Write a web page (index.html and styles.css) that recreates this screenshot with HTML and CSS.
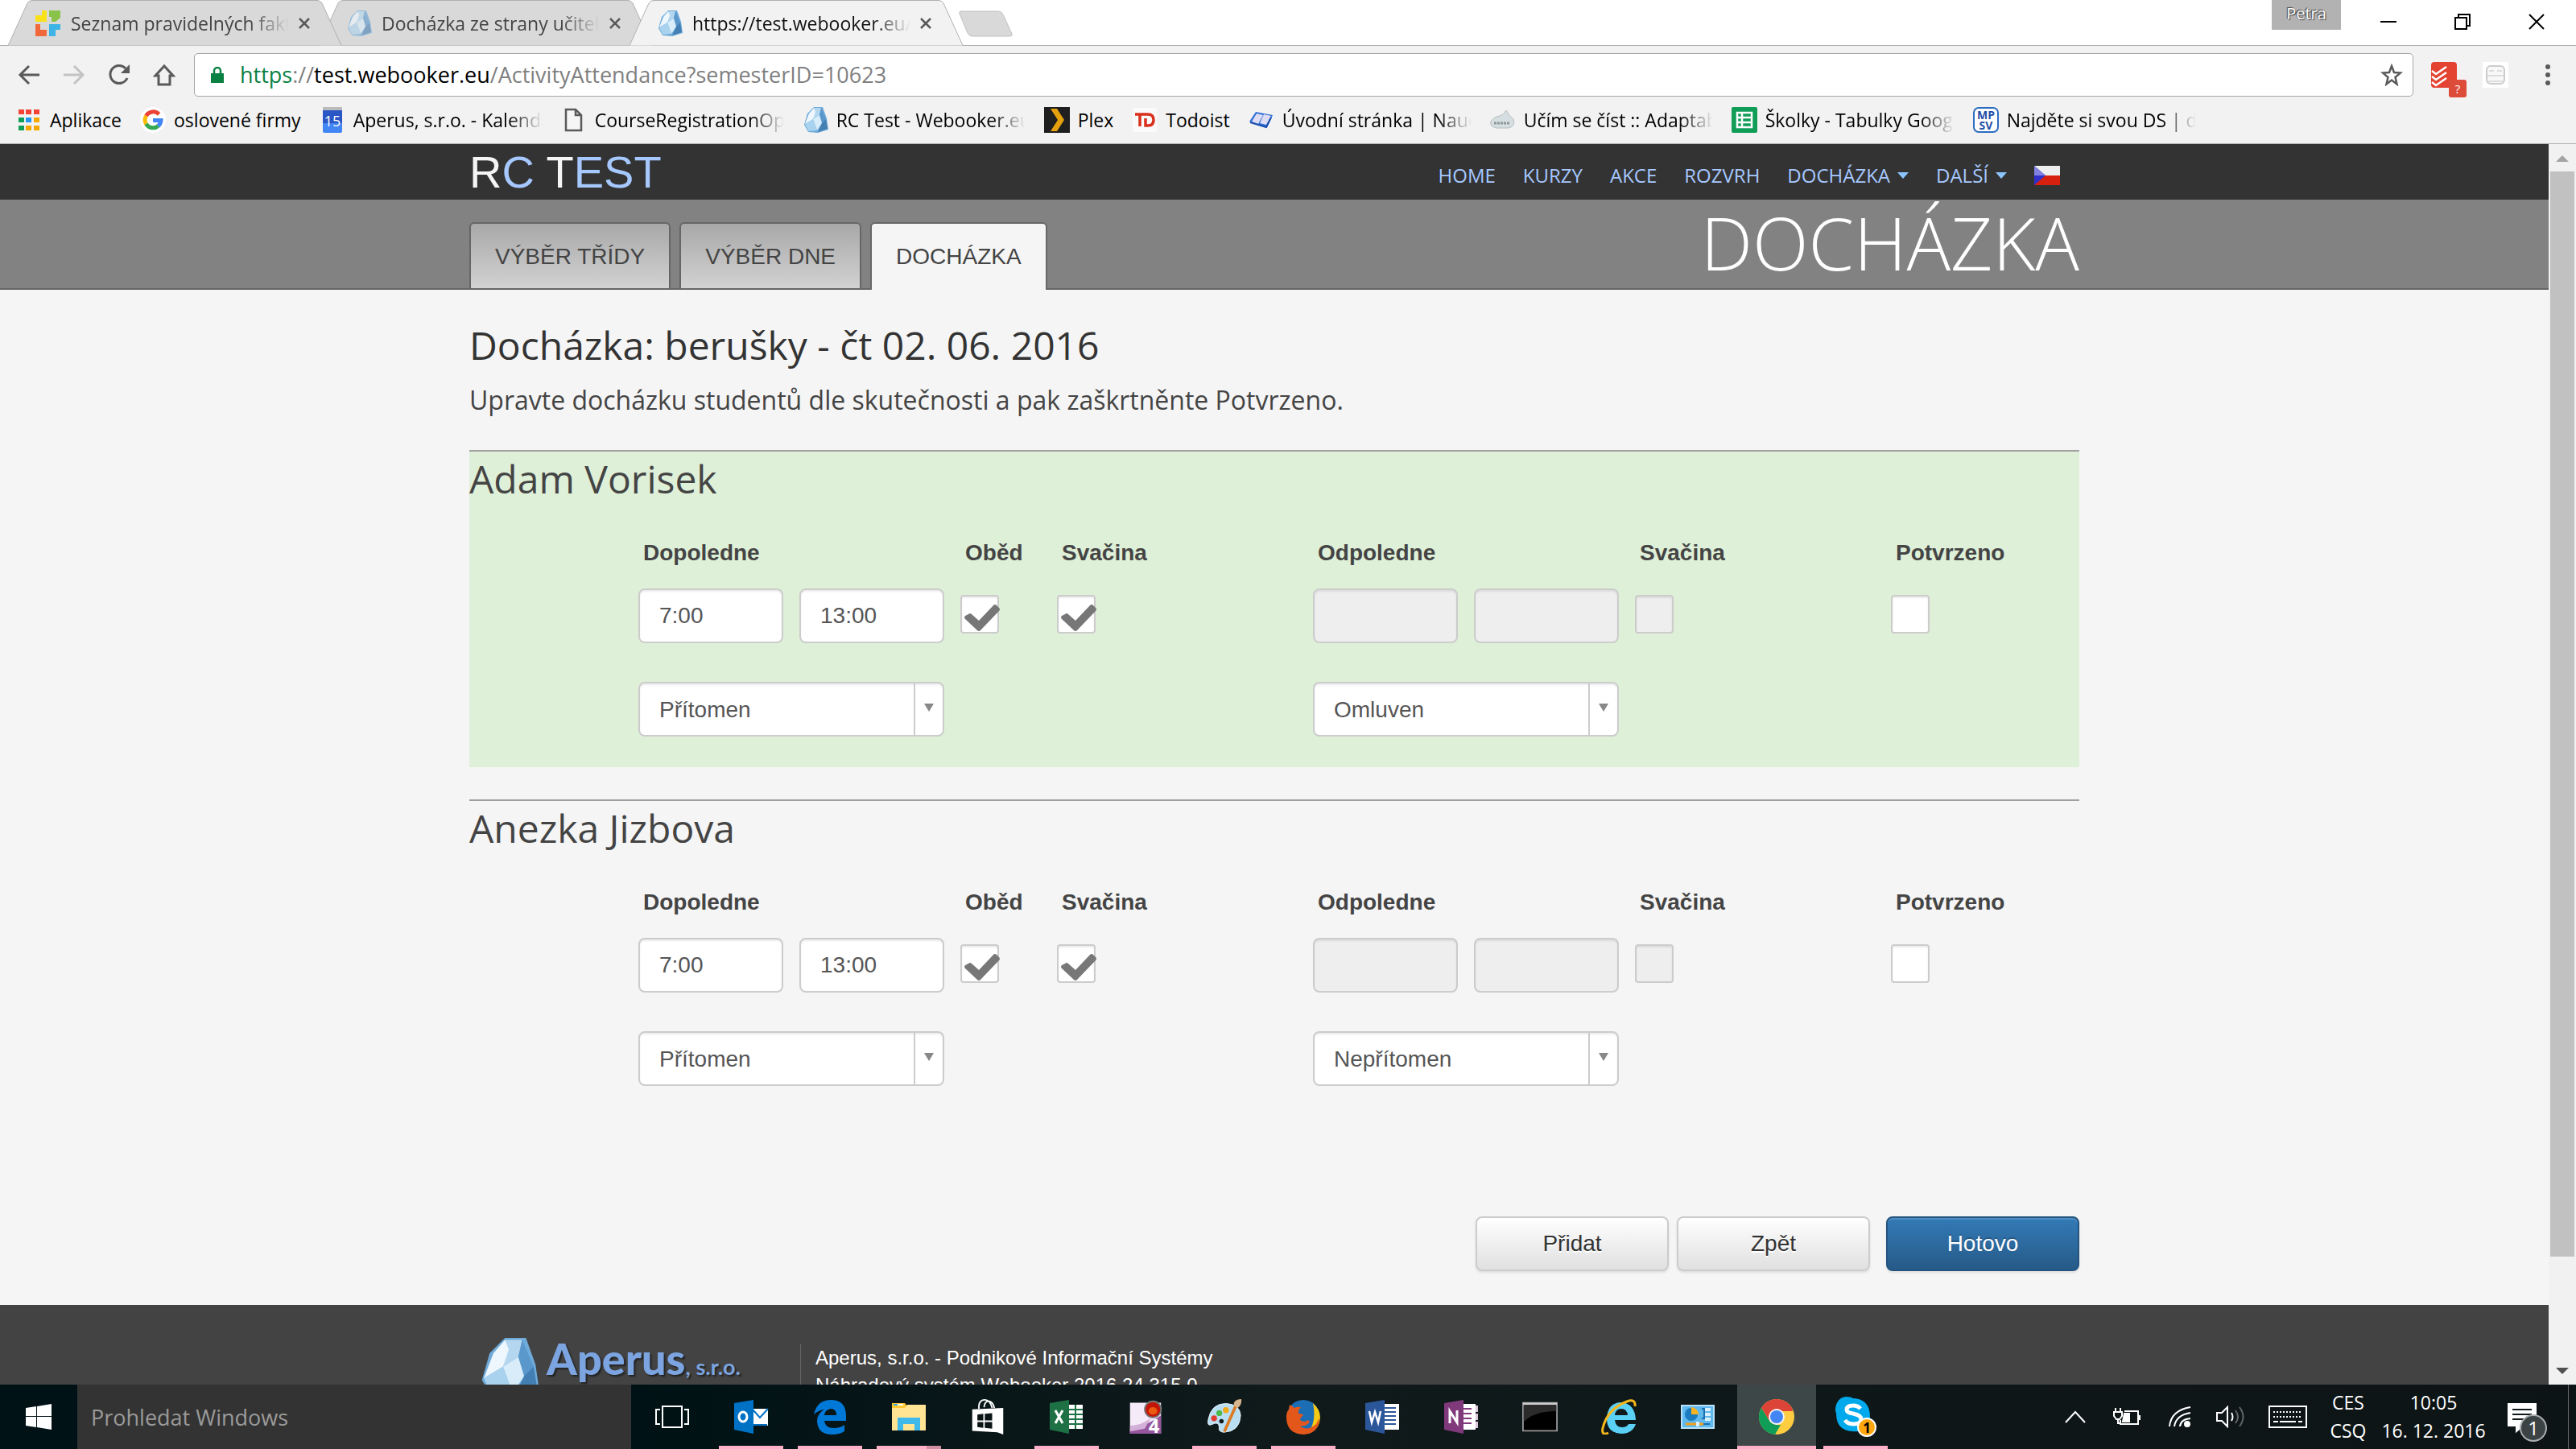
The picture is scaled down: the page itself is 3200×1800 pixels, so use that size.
FILE: index.html
```html
<!DOCTYPE html>
<html lang="cs">
<head>
    <meta charset="UTF-8">
    <meta name="viewport" content="width=device-width, initial-scale=1.0">
    <title>Docházka</title>
    <link rel="stylesheet" href="styles.css">
</head>
<body>
    <!-- Shared shapes -->
    <svg class="defs" aria-hidden="true">
        <defs>
            <symbol id="gem" viewBox="0 0 32 32">
                <path fill="#6fabda" d="M14 0h11l5 14 2 14-13 4-12-1-5-9 4-14z"/>
                <path fill="#eef7fd" d="M14 1l-6 7-5 13 10-6 4-9z"/>
                <path fill="#b4d7ef" d="M14 1h9l-2 9-8 5 3-9z"/>
                <path fill="#5a97cb" d="M23 1l6 14-5 5-3-10z"/>
                <path fill="#d8ecf9" d="M13 15l8-5 3 10-6 9z"/>
                <path fill="#a9d2ee" d="M3 21l10-6 5 14-11 1z"/>
                <path fill="#447fb3" d="M24 20l5-5 2 12-12 4z"/>
            </symbol>
            <symbol id="x" viewBox="0 0 14 14"><path d="M1 1l12 12M13 1L1 13" fill="none" stroke="#5a5a5a" stroke-width="2.5"/></symbol>
            <symbol id="tick" viewBox="0 0 44 34"><path fill="#777" d="M5 13q2-2 4 0l9 8L36 2q2-2 4 0l3 3q2 2 0 4L20 33q-2 2-4 0L1 19q-2-2 0-4z"/></symbol>
            <symbol id="tabshape" viewBox="0 0 414 57" preserveAspectRatio="none">
                <path d="M0 56.500L24 4q2-3.500 6-3.500h354q4 0 6 3.500l24 52.500" stroke="#b0b0b0"/>
            </symbol>
        </defs>
    </svg>

    <header class="browser">
        <div class="tabstrip">
            <div class="tab tab-first">
                <svg class="tab-shape"><use href="#tabshape"/></svg>
                <svg class="ico" viewBox="0 0 32 32">
                    <path fill="#f9e219" d="M8 0h6v14H0V6h8z"/><path fill="#8bc34a" d="M17 0h14v9l-6 5h-5V8h-3z"/>
                    <path fill="#f1693a" d="M0 17h6v7h8v8H0z"/><path fill="#3cb4e5" d="M17 17h14v7h-6v8h-8z"/>
                </svg>
                <span class="tab-title">Seznam pravidelných fakt</span>
                <button class="tab-close" aria-label="Zavřít"><svg><use href="#x"/></svg></button>
            </div>
            <div class="tab tab-second">
                <svg class="tab-shape"><use href="#tabshape"/></svg>
                <svg class="ico faded"><use href="#gem"/></svg>
                <span class="tab-title">Docházka ze strany učitele</span>
                <button class="tab-close" aria-label="Zavřít"><svg><use href="#x"/></svg></button>
            </div>
            <div class="tab tab-active">
                <svg class="tab-shape"><use href="#tabshape"/></svg>
                <svg class="ico"><use href="#gem"/></svg>
                <span class="tab-title">https://test.webooker.eu/</span>
                <button class="tab-close" aria-label="Zavřít"><svg><use href="#x"/></svg></button>
            </div>
            <button class="newtab" aria-label="Nová karta">
                <svg viewBox="0 0 68 34"><path d="M4 1h46q4 0 6 4l11 24q1 3-3 3H18q-4 0-6-4L2 4q-1-3 2-3z" fill="#d9d9d9" stroke="#c0c0c0"/></svg>
            </button>
            <div class="window-controls">
                <span class="profile">Petra</span>
                <button aria-label="Minimalizovat"><svg viewBox="0 0 20 20"><path d="M0 10h20"/></svg></button>
                <button aria-label="Obnovit"><svg viewBox="0 0 20 20"><path d="M5 4V1h14v14h-3M1 5h14v14H1z"/></svg></button>
                <button aria-label="Zavřít okno"><svg viewBox="0 0 20 20"><path d="M1 1l18 18M19 1L1 19"/></svg></button>
            </div>
        </div>

        <div class="toolbar">
            <button class="tool" aria-label="Zpět"><svg viewBox="0 0 28 28"><path d="M27 14H3M14 3L3 14l11 11"/></svg></button>
            <button class="tool off" aria-label="Vpřed"><svg viewBox="0 0 28 28"><path d="M1 14h24M14 3l11 11-11 11"/></svg></button>
            <button class="tool" aria-label="Načíst"><svg viewBox="0 0 28 28"><path d="M24 18a11 11 0 1 1-2-12"/><path d="M27 1v11H16z" fill="#5a5a5a" stroke="none"/></svg></button>
            <button class="tool" aria-label="Domů"><svg viewBox="0 0 28 28"><path d="M14 3L3 15h4v11h14V15h4z"/></svg></button>
            <div class="omnibox">
                <svg class="lock" viewBox="0 0 18 22"><path d="M1 9h16v12H1z" fill="#0b8043"/><path d="M5 10V6a4 4 0 0 1 8 0v4" fill="none" stroke="#0b8043" stroke-width="2.500"/></svg>
                <span class="url"><span class="secure">https</span>://<span class="host">test.webooker.eu</span>/ActivityAttendance?semesterID=10623</span>
                <svg class="star" viewBox="0 0 28 28"><path d="M14 3l3 8 8 .5-6.500 5.500 2 8.500-6.500-5-6.500 5 2-8.500L3 11.500l8-.5z" fill="none" stroke="#5a5a5a" stroke-width="2.500"/></svg>
            </div>
            <div class="extensions">
                <div class="todoist">
                    <svg class="ico" viewBox="0 0 32 32"><rect width="32" height="32" rx="4" fill="#e44332"/><path d="M1 11l5 4L19 6M1 18l5 4 13-9M1 25l5 4 13-9" fill="none" stroke="#fff" stroke-width="2.500"/></svg>
                    <span class="ext-badge">?</span>
                </div>
                <svg class="ico" viewBox="0 0 32 32"><path fill="#fff" d="M0 0h32v32H0z"/><rect x="5" y="5" width="22" height="22" rx="5" fill="#f8f8f8" stroke="#ccc" stroke-width="2"/><path d="M8 11h6M18 11h6M6 17h20M7 24h18" stroke="#ddd" stroke-width="2"/></svg>
                <svg class="dots" viewBox="0 0 8 28"><circle cx="4" cy="4" r="3"/><circle cx="4" cy="14" r="3"/><circle cx="4" cy="24" r="3"/></svg>
            </div>
        </div>

        <nav class="bookmarks">
            <a href="#"><svg class="ico" viewBox="0 0 32 32"><path fill="#f44336" d="M3 3h7v6H3zM12 3h7v6h-7zM22 3h7v6h-7z"/><path fill="#0f9d58" d="M3 13h7v6H3zM3 23h7v6H3z"/><path fill="#2196f3" d="M12 13h7v6h-7z"/><path fill="#f4a800" d="M22 13h7v6h-7zM12 23h7v6h-7zM22 23h7v6h-7z"/></svg><span>Aplikace</span></a>
            <a href="#"><svg class="ico" viewBox="0 0 32 32"><circle cx="16" cy="16" r="16" fill="#fff"/><g fill="none" stroke-width="5"><path d="M7.500 11a10 10 0 0 1 16-2" stroke="#ea4335"/><path d="M7.500 11a10 10 0 0 0 0 10" stroke="#fbbc05"/><path d="M7.500 21a10 10 0 0 0 15 2.500" stroke="#34a853"/><path d="M16 16.500h10a10 10 0 0 1-3.500 7" stroke="#4285f4"/></g></svg><span>oslovené firmy</span></a>
            <a href="#" class="long"><svg class="ico" viewBox="0 0 32 32"><path fill="#bbb" d="M4 0h24v6H4z"/><path fill="#2a56c6" d="M4 4h24v18H4z"/><path fill="#4285f4" d="M4 20h24v10q0 2-2 2H6q-2 0-2-2z"/><text x="16" y="24" text-anchor="middle" class="cal">15</text></svg><span>Aperus, s.r.o. - Kalendá</span></a>
            <a href="#" class="long"><svg class="ico" viewBox="0 0 32 32"><path d="M6 3h12l7 7v19H6zM18 3v7h7" fill="#f5f5f5" stroke="#5a5a5a" stroke-width="2.500"/></svg><span>CourseRegistrationOpt</span></a>
            <a href="#" class="long"><svg class="ico"><use href="#gem"/></svg><span>RC Test - Webooker.eu</span></a>
            <a href="#"><svg class="ico" viewBox="0 0 32 32"><path fill="#1f1f1f" d="M0 0h32v32H0z"/><path fill="#e5a00d" d="M8 2h8l9 14-9 14H8l9-14z"/></svg><span>Plex</span></a>
            <a href="#"><svg class="ico" viewBox="0 0 32 32"><rect x="1" y="1" width="30" height="30" rx="3" fill="#fafafa"/><path d="M4 9h13M10 9v15M17 9h3q7 0 7 7t-7 7h-3v-9" fill="none" stroke="#d9301c" stroke-width="3.500"/></svg><span>Todoist</span></a>
            <a href="#" class="long"><svg class="ico" viewBox="0 0 32 32"><path fill="#2f6fd6" d="M9 6l21 4-7 15-22-7z"/><path fill="#dedcf2" d="M10 8l8 2-6 11-8-3zM19 9l9 2-6 11-8-2z"/><path d="M2 19l20 6 6-12" fill="none" stroke="#1a4fae" stroke-width="2"/></svg><span>Úvodní stránka | Nauč</span></a>
            <a href="#" class="long"><svg class="ico" viewBox="0 0 32 32"><path fill="#d5dee0" stroke="#b5bdc0" d="M20 4q4 7 9 11 3 9-6 11H8q-9-2-7-8 4-6 11-7 5-1 8-7z"/><path d="M5 20h20" stroke="#8d9699" stroke-width="3" stroke-dasharray="3 1"/></svg><span>Učím se číst :: Adaptab</span></a>
            <a href="#" class="long"><svg class="ico" viewBox="0 0 32 32"><rect width="32" height="32" rx="2" fill="#0f9d58"/><path d="M7 7h18v18H7zM7 13h18M7 19h18M13 7v18" fill="none" stroke="#fff" stroke-width="2.500"/></svg><span>Školky - Tabulky Goog</span></a>
            <a href="#" class="long"><svg class="ico" viewBox="0 0 32 32"><rect x="1" y="1" width="30" height="30" rx="6" fill="#fff" stroke="#2b6cc0" stroke-width="2"/><text x="16" y="15" text-anchor="middle" class="mpsv">MP</text><text x="16" y="28" text-anchor="middle" class="mpsv">SV</text></svg><span>Najděte si svou DS | d</span></a>
        </nav>
    </header>

    <div class="viewport">
        <div class="page">
            <div class="topbar">
                <div class="container topbar-inner">
                    <a href="#" class="brand">R<span>C</span> T<span>EST</span></a>
                    <nav class="menu">
                        <a href="#">HOME</a>
                        <a href="#">KURZY</a>
                        <a href="#">AKCE</a>
                        <a href="#">ROZVRH</a>
                        <a href="#" class="dropdown">DOCHÁZKA</a>
                        <a href="#" class="dropdown">DALŠÍ</a>
                        <a href="#" aria-label="Čeština"><svg class="flag" viewBox="0 0 32 24"><path fill="#eee" d="M0 0h32v12H0z"/><path fill="#d7210e" d="M0 12h32v12H0z"/><path fill="#3030c8" d="M0 0l14 12L0 24z"/><path fill="#8080e0" d="M0 0l14 12H0z"/></svg></a>
                    </nav>
                </div>
            </div>
            <div class="subbar">
                <div class="container subbar-inner">
                    <nav class="steps">
                        <a href="#">VÝBĚR TŘÍDY</a>
                        <a href="#">VÝBĚR DNE</a>
                        <a href="#" class="current">DOCHÁZKA</a>
                    </nav>
                    <div class="section-title">DOCHÁZKA</div>
                </div>
            </div>

            <main class="container">
                <h1>Docházka: berušky - čt 02. 06. 2016</h1>
                <p class="lead">Upravte docházku studentů dle skutečnosti a pak zaškrtněnte Potvrzeno.</p>

                <section class="student edited">
                    <h2>Adam Vorisek</h2>
                    <div class="fields">
                        <label class="c-am" for="am1">Dopoledne</label>
                        <label class="c-lunch" for="lunch1">Oběd</label>
                        <label class="c-snack" for="snack1">Svačina</label>
                        <label class="c-pm" for="pm1">Odpoledne</label>
                        <label class="c-snack2" for="psnack1">Svačina</label>
                        <label class="c-done" for="done1">Potvrzeno</label>

                        <div class="times c-am"><input type="text" id="am1" value="7:00"><input type="text" value="13:00" aria-label="Dopoledne do"></div>
                        <div class="check c-lunch"><input type="checkbox" id="lunch1" checked><svg><use href="#tick"/></svg></div>
                        <div class="check c-snack"><input type="checkbox" id="snack1" checked><svg><use href="#tick"/></svg></div>
                        <div class="times c-pm"><input type="text" id="pm1" disabled><input type="text" aria-label="Odpoledne do" disabled></div>
                        <div class="check c-snack2"><input type="checkbox" id="psnack1" disabled></div>
                        <div class="check c-done"><input type="checkbox" id="done1"></div>

                        <div class="select c-am"><select aria-label="Stav dopoledne"><option>Přítomen</option></select></div>
                        <div class="select c-pm"><select aria-label="Stav odpoledne"><option>Omluven</option></select></div>
                    </div>
                </section>

                <section class="student">
                    <h2>Anezka Jizbova</h2>
                    <div class="fields">
                        <label class="c-am" for="am2">Dopoledne</label>
                        <label class="c-lunch" for="lunch2">Oběd</label>
                        <label class="c-snack" for="snack2">Svačina</label>
                        <label class="c-pm" for="pm2">Odpoledne</label>
                        <label class="c-snack2" for="psnack2">Svačina</label>
                        <label class="c-done" for="done2">Potvrzeno</label>

                        <div class="times c-am"><input type="text" id="am2" value="7:00"><input type="text" value="13:00" aria-label="Dopoledne do"></div>
                        <div class="check c-lunch"><input type="checkbox" id="lunch2" checked><svg><use href="#tick"/></svg></div>
                        <div class="check c-snack"><input type="checkbox" id="snack2" checked><svg><use href="#tick"/></svg></div>
                        <div class="times c-pm"><input type="text" id="pm2" disabled><input type="text" aria-label="Odpoledne do" disabled></div>
                        <div class="check c-snack2"><input type="checkbox" id="psnack2" disabled></div>
                        <div class="check c-done"><input type="checkbox" id="done2"></div>

                        <div class="select c-am"><select aria-label="Stav dopoledne"><option>Přítomen</option></select></div>
                        <div class="select c-pm"><select aria-label="Stav odpoledne"><option>Nepřítomen</option></select></div>
                    </div>
                </section>

                <div class="actions">
                    <button class="btn">Přidat</button>
                    <button class="btn">Zpět</button>
                    <button class="btn btn-primary">Hotovo</button>
                </div>
            </main>

            <footer class="footer">
                <div class="container footer-inner">
                    <div class="logo">
                        <svg class="logo-gem"><use href="#gem"/></svg>
                        <div class="logo-text">Aperus<small>, s.r.o.</small></div>
                    </div>
                    <div class="about">Aperus, s.r.o. - Podnikové Informační Systémy<br>Náhradový systém Webooker 2016.24.315.0</div>
                </div>
            </footer>
        </div>
        <div class="scrollbar">
            <svg viewBox="0 0 16 8"><path fill="#a3a3a3" d="M8 0l8 8H0z"/></svg>
            <div class="thumb"></div>
            <svg viewBox="0 0 16 8"><path fill="#505050" d="M0 0h16L8 8z"/></svg>
        </div>
    </div>

    <div class="taskbar">
        <button class="start" aria-label="Start"><svg viewBox="0 0 32 32"><path fill="#fff" d="M0 5l13-2v12H0zM14 3l18-3v15H14zM0 16h13v13L0 27zM14 16h18v16l-18-3z"/></svg></button>
        <input class="search" type="text" placeholder="Prohledat Windows" aria-label="Prohledat Windows">
        <div class="apps-row">
            <button class="app" aria-label="Zobrazení úkolů"><svg viewBox="0 0 42 44"><path d="M9 9h24v26H9zM6 13H1v18h5M36 13h5v18h-5" fill="none" stroke="#fff" stroke-width="2"/></svg></button>
            <button class="app running" aria-label="Outlook"><svg viewBox="0 0 44 44"><path fill="#fff" d="M24 12h19v21H24z"/><path d="M24 13l9 10 10-11" fill="none" stroke="#0072c6" stroke-width="2"/><path d="M24 32h18" stroke="#0072c6" stroke-width="2"/><path fill="#0072c6" d="M1 5l24-4v42L1 38z"/><ellipse cx="12" cy="22" rx="5" ry="6" fill="none" stroke="#fff" stroke-width="3"/></svg></button>
            <button class="app running" aria-label="Edge"><svg viewBox="0 0 44 44"><path fill="#0078d7" d="M2 19Q6 1 23 1q19 0 19 20v6H15q1 9 12 9 8 0 13-4v8q-6 4-15 4Q7 44 6 28q0-10 9-15-8 1-13 6zm13 1h15q0-8-7-8-7 1-8 8z"/></svg></button>
            <button class="app running grouped" aria-label="Průzkumník"><svg viewBox="0 0 44 44"><path fill="#ffc833" d="M1 5h16l3 4v4H1z"/><path fill="#ffe494" d="M1 11h16l3-4h23v32H1z"/><path fill="#fff" d="M3 6h12v2H3z"/><path fill="#35a8e0" d="M3 6h5v2H3z"/><path fill="#3fb8ea" d="M8 23h28v16h-7v-8H15v8H8z"/></svg></button>
            <button class="app" aria-label="Store"><svg viewBox="0 0 44 48"><path d="M10 13V9q1-8 8-8t10 11M17 11q1-9 7-8 5 1 7 9" fill="none" stroke="#fff" stroke-width="2"/><path fill="#fff" d="M1 14l42-2v36l-8-3L1 43z"/><path fill="#0c1516" d="M8 21l8-1v9H8zM18 20l10-1v10H18zM8 31h8v8l-8-1zM18 31h10v9l-10-1z"/></svg></button>
            <button class="app running" aria-label="Excel"><svg viewBox="0 0 44 44"><path fill="#fff" d="M24 7h18v30H24z"/><path d="M24 13h18M24 19h18M24 25h18M24 31h18M33 7v30" stroke="#1e7145" stroke-width="2"/><path fill="#1e7145" d="M1 5l24-4v42L1 38z"/><path d="M8 14l9 16M17 14L8 30" stroke="#fff" stroke-width="3"/></svg></button>
            <button class="app" aria-label="Aplikace 4"><svg viewBox="0 0 44 48"><path fill="#f5eaf8" d="M1 5h42v42H1z"/><path fill="#96569e" d="M1 40q22-3 42-18v25H1z"/><path fill="#d2b0d8" d="M1 36q15 0 28-10l-8 14L1 44z"/><circle cx="32" cy="14" r="12" fill="#777"/><circle cx="32" cy="14" r="10" fill="#c41408"/><ellipse cx="32" cy="16" rx="6" ry="5" fill="#ea5a10"/><text x="26" y="46" class="four">4</text></svg></button>
            <button class="app running" aria-label="Malování"><svg viewBox="0 0 48 48"><path fill="#b9def2" stroke="#e9f6fc" d="M26 6Q6 6 2 28q-2 10 6 6t9 4q-2 6 6 7 22-1 23-23Q45 7 26 6z"/><circle cx="20" cy="30" r="3" fill="#10181a"/><circle cx="10" cy="26" r="4" fill="#e23a2c"/><circle cx="17" cy="19" r="4" fill="#4fb84a"/><circle cx="26" cy="15" r="4" fill="#f3aa18"/><path d="M40 8L24 44" stroke="#dc7b25" stroke-width="4"/><path fill="#d6b48c" d="M37 9q-2-8 10-9 1 8-5 12z"/></svg></button>
            <button class="app running" aria-label="Firefox"><svg viewBox="0 0 44 44"><circle cx="22" cy="21" r="20" fill="#1b6db4"/><path fill="#f6c915" d="M34 5q9 8 9 18-1 16-16 20 12-14 7-38z"/><path fill="#e4571b" d="M5 7q3 1 6 4 4-2 8-1-4 4-3 8 5 0 6 2-4 3-4 6 5 4 10 0l2 2q-4 7-12 5 8 8 20-2l4-8q0 20-20 21Q1 43 1 22q0-6 3-9z"/></svg></button>
            <button class="app" aria-label="Word"><svg viewBox="0 0 44 44"><path fill="#fff" d="M24 6h19v32H24z"/><path d="M24 11h15M24 16h15M24 21h15M24 26h15M24 31h15" stroke="#2b579a" stroke-width="2"/><path fill="#2b579a" d="M1 5l24-4v42L1 38z"/><path d="M6 15l3 14 4-13 4 13 3-14" fill="none" stroke="#fff" stroke-width="2.500"/></svg></button>
            <button class="app" aria-label="OneNote"><svg viewBox="0 0 44 44"><path fill="#fff" d="M24 6h16v32H24z"/><path fill="#dcc6dc" d="M40 8h3v8h-3zM40 18h3v8h-3zM40 28h3v8h-3z"/><path d="M24 12h11M24 18h11M24 24h11M24 30h11" stroke="#80397b" stroke-width="2"/><path fill="#80397b" d="M1 5l24-4v42L1 38z"/><path d="M8 30V15l9 14V14" fill="none" stroke="#fff" stroke-width="3"/></svg></button>
            <button class="app" aria-label="Příkazový řádek"><svg viewBox="0 0 48 40"><path fill="#000" stroke="#999" stroke-width="2" d="M1 1h46v38H1z"/><path fill="#ccc" d="M1 1h46v3H1z"/><path fill="#2b2b2b" d="M2 4h44v8Q14 13 2 27z"/></svg></button>
            <button class="app" aria-label="Internet Explorer"><svg viewBox="0 0 44 44"><path fill="#5bd0f5" d="M24 4q18 1 19 22H17q1 9 9 9 6 0 8-4h9q-4 12-18 12Q7 42 7 24 8 5 24 4zm-7 16h16q-1-8-8-8t-8 8z"/><path d="M9 42q-9 4-7-6Q8 12 32 3q11-4 10 6" fill="none" stroke="#f5b81c" stroke-width="3"/></svg></button>
            <button class="app" aria-label="Ovládací panely"><svg viewBox="0 0 44 44"><path fill="#5fb8ee" stroke="#b8e2fa" stroke-width="2" d="M2 8h40v28H2z"/><circle cx="14" cy="19" r="8" fill="#1b7cc0"/><path fill="#f8b31f" d="M14 19v-9a9 9 0 0 1 9 9z"/><path d="M27 12h3v12h-3M7 31h30" fill="none" stroke="#1b6fae" stroke-width="2"/><path d="M7 31h22" stroke="#f0a020" stroke-width="3"/><path fill="#d8f0fd" d="M31 11h7v4h-7zM31 17h7v4h-7zM31 23h7v4h-7zM20 28h4v6h-4z"/></svg></button>
            <button class="app running focused" aria-label="Chrome"><svg viewBox="0 0 44 44"><circle cx="22" cy="22" r="22" fill="#ffcd40"/><path fill="#db4437" d="M3 11a22 22 0 0 1 38 0l1 4H22l-9 12z"/><path fill="#0f9d58" d="M3 11l10 16q4 6 14 5l-7 12A22 22 0 0 1 3 11z"/><circle cx="22" cy="22" r="10" fill="#f5f5f5"/><circle cx="22" cy="22" r="8" fill="#4285f4"/></svg></button>
            <button class="app running" aria-label="Skype"><svg class="skype" viewBox="0 0 52 52"><path fill="#00a9ec" d="M14 1q6 0 9 2Q44 4 44 26q0 6-1 9 0 8-10 8-5 2-11 1Q2 43 2 22q-2-5 0-11 4-10 12-10z"/><path d="M32 16q-3-4-9-4-8 0-8 5 0 4 8 5 10 2 10 7 0 6-10 6-7 0-10-5" fill="none" stroke="#fff" stroke-width="5"/><circle cx="40" cy="39" r="11" fill="#ffa70f" stroke="#fff" stroke-width="2"/><text x="40" y="46" text-anchor="middle" class="one">1</text></svg></button>
        </div>
        <div class="tray">
            <svg class="t-chevron" viewBox="0 0 26 16"><path d="M1 15L13 2l12 13"/></svg>
            <svg class="t-battery" viewBox="0 0 34 26"><path d="M14 6h17v16H9v-5M33 11v6M3 2v5M9 2v5M1 7h10v5l-3 4H4l-3-4zM6 16v5h3"/><path d="M14 9h6v10h-8z" fill="#fff"/></svg>
            <svg class="t-wifi" viewBox="0 0 28 28"><path d="M1 26Q3 6 27 2M7 26Q9 12 27 9M14 26q1-9 13-10"/><circle cx="23" cy="23" r="3" fill="#fff"/></svg>
            <svg class="t-volume" viewBox="0 0 36 28"><path d="M1 9h6l7-7v24l-7-7H1zM19 9q3 5 0 10"/><path class="dim" d="M24 6q6 8 0 16M29 2q9 12 0 24"/></svg>
            <svg class="t-keyboard" viewBox="0 0 48 28"><path d="M1 1h46v26H1z"/><path d="M6 8h36M6 14h36" stroke-dasharray="2 2"/><path d="M6 20h6M14 20h20M37 20h5"/></svg>
            <div class="lang">CES<br>CSQ</div>
            <div class="clock">10:05<br>16. 12. 2016</div>
            <div class="notify">
                <svg viewBox="0 0 50 48"><path fill="#fff" d="M1 1h34v27H19l-8 7v-7H1z"/><path d="M6 8h24M6 14h24M6 20h16" stroke="#10181a" stroke-width="2"/><circle cx="32" cy="31" r="16" fill="#3c4345" stroke="#a9adae" stroke-width="2"/><text x="32" y="40" text-anchor="middle" class="count">1</text></svg>
            </div>
        </div>
    </div>
</body>
</html>
```
FILE: styles.css
```css
* {
    box-sizing: border-box;
}

body {
    margin: 0;
    height: 100vh;
    display: flex;
    flex-direction: column;
    overflow: hidden;
    font-family: "Liberation Sans", Arial, sans-serif;
    font-size: 28px;
    color: #444;
    background-color: #f5f5f5;
}

button {
    padding: 0;
    border: none;
    background: none;
    font-family: inherit;
}

a {
    color: inherit;
    text-decoration: none;
}

svg {
    display: block;
    flex: none;
}

.defs {
    position: absolute;
    width: 0;
    height: 0;
}

.ico {
    width: 32px;
    height: 32px;
}

.faded {
    opacity: 0.6;
}

/* Browser window */
.browser {
    flex: none;
    height: 179px;
    border-bottom: 1px solid #b0b0b0;
    background-color: #f2f2f2;
    font-family: "Open Sans", sans-serif;
    color: #000;
}

.tabstrip {
    display: flex;
    height: 57px;
    padding-left: 10px;
    background-color: #fff;
    box-shadow: inset 0 -1px #b0b0b0;
}

.tab {
    position: relative;
    display: flex;
    align-items: center;
    gap: 12px;
    width: 414px;
    margin-right: -28px;
    padding: 0 39px 0 34px;
    font-size: 23px;
    color: #444;
}

.tab-first {
    z-index: 2;
}

.tab-second {
    z-index: 1;
}

.tab-active {
    z-index: 3;
    color: #111;
}

.tab-shape {
    position: absolute;
    inset: 0;
    width: 100%;
    height: 100%;
    z-index: -1;
    fill: #d9d9d9;
}

.tab-active .tab-shape {
    fill: #f2f2f2;
}

.tab-title {
    flex: 1;
    overflow: hidden;
    white-space: nowrap;
    mask-image: linear-gradient(to right, #000 82%, transparent);
}

.tab-close svg {
    width: 14px;
    height: 14px;
}

.newtab {
    align-self: flex-start;
    margin: 13px 0 0 22px;
}

.newtab svg {
    width: 68px;
    height: 34px;
}

.window-controls {
    display: flex;
    margin-left: auto;
    padding-right: 3px;
}

.window-controls button {
    width: 92px;
    height: 54px;
    display: grid;
    place-items: center;
}

.window-controls svg {
    width: 20px;
    height: 20px;
    fill: none;
    stroke: #000;
    stroke-width: 2;
}

.profile {
    width: 86px;
    height: 37px;
    margin-right: 13px;
    background-color: #b2b2b2;
    color: #fff;
    font-size: 20px;
    line-height: 34px;
    text-align: center;
    text-shadow: 1px 1px 1px #444, -1px -1px 1px #444;
}

.toolbar {
    display: flex;
    align-items: center;
    height: 72px;
    padding: 0 31px 0 8px;
}

.tool {
    width: 56px;
    height: 56px;
    display: grid;
    place-items: center;
}

.tool svg {
    width: 28px;
    height: 28px;
    fill: none;
    stroke: #5a5a5a;
    stroke-width: 3;
}

.off {
    opacity: 0.3;
}

.omnibox {
    flex: 1;
    display: flex;
    align-items: center;
    height: 54px;
    margin-left: 9px;
    padding: 0 12px 0 19px;
    background-color: #fff;
    border: 1px solid #a5a5a5;
    border-radius: 5px;
}

.lock {
    width: 18px;
    height: 22px;
}

.url {
    flex: 1;
    margin-left: 19px;
    font-size: 27px;
    line-height: 36px;
    color: #808080;
}

.secure {
    color: #0b8043;
}

.host {
    color: #000;
}

.star {
    width: 28px;
    height: 28px;
}

.extensions {
    display: flex;
    align-items: center;
    gap: 32px;
    margin-left: 22px;
}

.todoist {
    position: relative;
}

.ext-badge {
    position: absolute;
    left: 22px;
    top: 22px;
    width: 22px;
    height: 22px;
    border-radius: 3px;
    background-color: #dd4b39;
    color: #fff;
    font-size: 15px;
    line-height: 22px;
    text-align: center;
}

.dots {
    width: 8px;
    height: 28px;
    margin-left: 13px;
    fill: #5a5a5a;
}

.bookmarks {
    display: flex;
    align-items: center;
    height: 40px;
    padding-left: 20px;
    font-size: 23px;
}

.bookmarks a {
    display: flex;
    align-items: center;
    gap: 10px;
    margin-right: 23px;
    white-space: nowrap;
}

.bookmarks .long span {
    width: 235px;
    overflow: hidden;
    mask-image: linear-gradient(to right, #000 82%, transparent);
}

.cal {
    font-size: 18px;
    fill: #fff;
}

.mpsv {
    font-size: 14px;
    font-weight: bold;
    fill: #1f4fa8;
}

/* Web page */
.viewport {
    flex: 1;
    min-height: 0;
    display: flex;
}

.page {
    flex: 1;
    overflow: hidden;
}

.container {
    max-width: 2000px;
    margin: 0 auto;
}

.topbar {
    background-color: #333;
}

.topbar-inner {
    display: flex;
    align-items: center;
    justify-content: space-between;
    height: 69px;
}

.brand {
    font-size: 56px;
    color: #f5f5f5;
}

.brand span {
    color: #a6c8ff;
}

.menu {
    display: flex;
    align-items: center;
    gap: 34px;
    padding: 8px 24px 0 0;
    font-family: "Open Sans", sans-serif;
    font-size: 24px;
    color: #a6c8ff;
}

.dropdown {
    display: flex;
    align-items: center;
    gap: 9px;
}

.dropdown::after {
    content: "";
    border: 7px solid transparent;
    border-top: 8px solid #8cc4ff;
    border-bottom: none;
}

.flag {
    width: 32px;
    height: 24px;
}

.subbar {
    background-color: #828282;
    border-bottom: 2px solid #666;
}

.subbar-inner {
    display: flex;
    align-items: flex-end;
    justify-content: space-between;
    height: 110px;
}

.steps {
    display: flex;
    gap: 11px;
}

.steps a {
    height: 82px;
    padding: 0 30px;
    border: 2px solid #666;
    border-bottom: none;
    border-radius: 6px 6px 0 0;
    background: linear-gradient(#a8a8a8, #d2d2d2);
    line-height: 82px;
}

.steps .current {
    height: 84px;
    margin-bottom: -2px;
    background: #f5f5f5;
}

.section-title {
    align-self: flex-start;
    font-family: "Open Sans", sans-serif;
    font-size: 91px;
    font-weight: 300;
    line-height: 106px;
    color: #fff;
}

h1, h2 {
    margin: 0;
    font-family: "Open Sans", sans-serif;
    font-size: 48px;
    font-weight: 400;
    line-height: 56px;
}

h1 {
    padding-top: 41px;
    color: #333;
}

.lead {
    margin: 18px 0 40px;
    font-family: "Open Sans", sans-serif;
    font-size: 32px;
    line-height: 44px;
}

.student {
    margin-bottom: 40px;
    padding: 6px 0 38px;
    border-top: 2px solid #a0a0a0;
}

.edited {
    background-color: #dff0d8;
}

.fields {
    display: grid;
    grid-template-columns: 210fr 400fr 120fr 318fr 400fr 318fr 234fr;
    row-gap: 24px;
    margin-top: 44px;
}

.fields label {
    grid-row: 1;
    padding-left: 6px;
    font-weight: bold;
    line-height: 40px;
}

.times, .check {
    grid-row: 2;
}

.select {
    grid-row: 3;
}

.c-am {
    grid-column: 2;
}

.c-lunch {
    grid-column: 3;
}

.c-snack {
    grid-column: 4;
}

.c-pm {
    grid-column: 5;
}

.c-snack2 {
    grid-column: 6;
}

.c-done {
    grid-column: 7;
}

.times {
    display: flex;
    gap: 20px;
    padding: 0 20px 24px 0;
}

.times input, .select select {
    width: 100%;
    min-width: 0;
    height: 68px;
    padding: 0 24px;
    border: 2px solid #ccc;
    border-radius: 8px;
    background-color: #fff;
    box-shadow: inset 0 2px 2px rgba(0, 0, 0, 0.08);
    font-family: inherit;
    font-size: 28px;
    color: #555;
}

.times input:disabled, .check input:disabled {
    background-color: #eee;
}

.check {
    display: grid;
    grid-template-columns: 48px;
    align-content: start;
    padding-top: 8px;
}

.check input {
    grid-area: 1 / 1;
    width: 48px;
    height: 48px;
    margin: 0;
    appearance: none;
    border: 2px solid #ccc;
    border-radius: 4px;
    background-color: #fff;
    box-shadow: inset 0 2px 2px rgba(0, 0, 0, 0.08);
}

.check svg {
    grid-area: 1 / 1;
    width: 44px;
    height: 34px;
    margin: 11px 0 0 5px;
    pointer-events: none;
}

.select {
    position: relative;
    margin-right: 20px;
}

.select select {
    display: block;
    appearance: none;
}

.select::before {
    content: "";
    position: absolute;
    top: 2px;
    right: 36px;
    width: 2px;
    height: 64px;
    background-color: #ccc;
}

.select::after {
    content: "";
    position: absolute;
    top: 27px;
    right: 13px;
    border: 6px solid transparent;
    border-top: 10px solid #888;
    border-bottom: none;
}

.actions {
    display: flex;
    justify-content: flex-end;
    gap: 10px;
    padding: 84px 0 42px;
}

.btn {
    width: 240px;
    height: 68px;
    border: 2px solid #ccc;
    border-radius: 8px;
    background: linear-gradient(#fff, #e0e0e0);
    box-shadow: 0 2px 3px rgba(0, 0, 0, 0.1);
    font-size: 28px;
    color: #333;
    text-shadow: 0 2px 0 #fff;
}

.btn-primary {
    margin-left: 10px;
    border-color: #245580;
    background: linear-gradient(#337ab7, #265a88);
    box-shadow: inset 0 2px 0 rgba(255, 255, 255, 0.15), 0 2px 3px rgba(0, 0, 0, 0.1);
    color: #fff;
    text-shadow: 0 -2px 0 rgba(0, 0, 0, 0.2);
}

.footer {
    min-height: 200px;
    background-color: #434343;
}

.footer-inner {
    display: flex;
    padding-top: 41px;
}

.logo {
    display: flex;
    width: 411px;
    padding-left: 11px;
    gap: 9px;
}

.logo-gem {
    width: 76px;
    height: 76px;
}

.logo-text {
    font-family: Lato, sans-serif;
    font-size: 54px;
    font-weight: 900;
    line-height: 52px;
    color: #7ba4e0;
    text-shadow: 2px 2px 2px #222;
}

.logo-text small {
    font-size: 27px;
    font-weight: bold;
}

.about {
    margin-top: 8px;
    padding-left: 18px;
    border-left: 1px solid #666;
    font-size: 24px;
    line-height: 34px;
    color: #fff;
}

.scrollbar {
    display: flex;
    flex-direction: column;
    align-items: center;
    width: 34px;
    padding: 14px 0 13px;
    background-color: #f1f1f1;
}

.scrollbar svg {
    width: 16px;
    height: 8px;
}

.thumb {
    flex: 1;
    width: 30px;
    margin: 12px 0 138px;
    background-color: #c1c1c1;
}

/* Windows taskbar */
.taskbar {
    flex: none;
    display: flex;
    height: 80px;
    background: linear-gradient(to right, #001215 25%, #101a1b 50%, #0d1416);
    font-family: "Open Sans", sans-serif;
    color: #fff;
}

.start {
    width: 96px;
    display: grid;
    place-items: center;
}

.start svg {
    width: 32px;
    height: 32px;
}

.search {
    width: 688px;
    padding: 0 17px;
    border: none;
    background-color: #333;
    font-family: inherit;
    font-size: 27px;
}

.search::placeholder {
    color: #9a9a9a;
}

.apps-row {
    display: flex;
    padding-left: 2px;
}

.app {
    display: grid;
    place-items: center;
    width: 98px;
    height: 80px;
}

.app svg {
    width: 44px;
    height: 44px;
}

.app .skype {
    width: 52px;
    height: 52px;
}

.app.running {
    background: linear-gradient(#ffb0c8, #ffb0c8) no-repeat center bottom / 80px 4px;
}

.app.grouped {
    background: linear-gradient(to right, #ffb0c8 62px, #d08fa3 62px) no-repeat center bottom / 80px 4px;
}

.app.focused {
    background-color: #3e4748;
    background-size: 98px 4px;
}

.four {
    font-size: 26px;
    font-weight: bold;
    fill: #fff;
}

.one {
    font-size: 17px;
    font-weight: bold;
    fill: #000;
}

.tray {
    display: flex;
    align-items: center;
    margin-left: auto;
    padding-right: 9px;
}

.tray svg {
    fill: none;
    stroke: #fff;
    stroke-width: 2;
}

.tray .dim {
    stroke: #5f6768;
}

.t-chevron {
    width: 26px;
    height: 16px;
}

.t-battery {
    width: 34px;
    height: 26px;
    margin-left: 34px;
}

.t-wifi {
    width: 28px;
    height: 28px;
    margin-left: 35px;
}

.t-volume {
    width: 36px;
    height: 28px;
    margin-left: 31px;
}

.t-keyboard {
    width: 48px;
    height: 28px;
    margin-left: 29px;
}

.lang, .clock {
    font-size: 23px;
    line-height: 35px;
    text-align: center;
}

.lang {
    width: 50px;
    margin-left: 26px;
}

.clock {
    width: 130px;
    margin-left: 16px;
}

.notify {
    height: 80px;
    margin-left: 27px;
    padding: 23px 25px 0 0;
    border-right: 1px solid #666;
}

.notify svg {
    width: 50px;
    height: 48px;
}

.notify text {
    stroke: none;
}

.count {
    font-size: 24px;
    fill: #fff;
}
```
